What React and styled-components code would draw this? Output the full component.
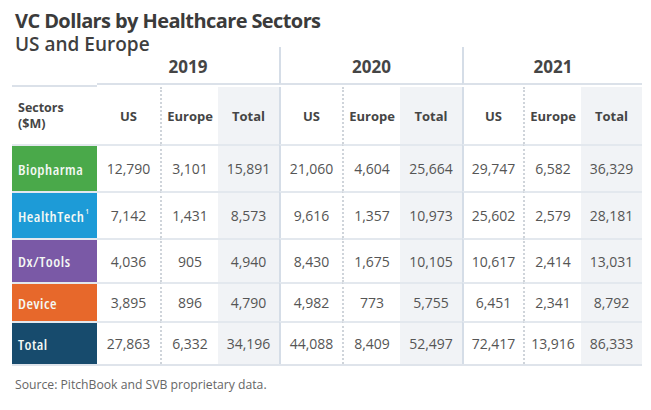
import React from 'react';
import styled, { createGlobalStyle } from 'styled-components';

const Global = createGlobalStyle`
  body {
    margin: 0;
    background: #ffffff;
    font-family: 'Open Sans', 'Noto Sans', sans-serif;
  }
`;

const groups = [
  { year: '2019' },
  { year: '2020' },
  { year: '2021' },
];

const rows = [
  { name: 'Biopharma', color: '#4aa94a', h: 47, vals: ['12,790', '3,101', '15,891', '21,060', '4,604', '25,664', '29,747', '6,582', '36,329'] },
  { name: 'HealthTech', sup: '1', color: '#1d9bd7', h: 47, vals: ['7,142', '1,431', '8,573', '9,616', '1,357', '10,973', '25,602', '2,579', '28,181'] },
  { name: 'Dx/Tools', color: '#7a59a6', h: 44, vals: ['4,036', '905', '4,940', '8,430', '1,675', '10,105', '10,617', '2,414', '13,031'] },
  { name: 'Device', color: '#e7682b', h: 39, vals: ['3,895', '896', '4,790', '4,982', '773', '5,755', '6,451', '2,341', '8,792'] },
  { name: 'Total', color: '#174b6d', h: 43, vals: ['27,863', '6,332', '34,196', '44,088', '8,409', '52,497', '72,417', '13,916', '86,333'] },
];

const subCols = ['US', 'Europe', 'Total'];

export default function App() {
  return (
    <Page>
      <Global />
      <Title>VC Dollars by Healthcare Sectors</Title>
      <Subtitle>US and Europe</Subtitle>
      <Table>
        <Corner />
        {groups.map((g, i) => (
          <Year key={g.year} $divider={i > 0}>{g.year}</Year>
        ))}

        <HeadLabel>
          <span>Sectors</span>
          <span>($M)</span>
        </HeadLabel>
        {groups.map((g, gi) =>
          subCols.map((c, ci) => (
            <HeadCell
              key={g.year + c}
              $kind={ci}
              $divider={gi > 0 && ci === 0}
            >
              {c}
            </HeadCell>
          ))
        )}

        {rows.map((r) => (
          <React.Fragment key={r.name}>
            <Sector $color={r.color} $h={r.h}>
              {r.name}
              {r.sup && <sup>{r.sup}</sup>}
            </Sector>
            {r.vals.map((v, i) => (
              <Cell
                key={i}
                $h={r.h}
                $kind={i % 3}
                $divider={i > 0 && i % 3 === 0}
              >
                {v}
              </Cell>
            ))}
          </React.Fragment>
        ))}
      </Table>
      <Source>Source: PitchBook and SVB proprietary data.</Source>
    </Page>
  );
}

const Page = styled.div`
  width: 651px;
  height: 410px;
  padding: 9px 9px 0 12px;
  box-sizing: border-box;
  color: #444;
`;

const Title = styled.h1`
  margin: 0 0 0 3px;
  font-size: 20px;
  line-height: 24px;
  font-weight: 700;
  font-stretch: 88%;
  letter-spacing: -0.6px;
  color: #3b3b3b;
`;

const Subtitle = styled.h2`
  margin: 0 0 0 3px;
  font-size: 19px;
  line-height: 23px;
  font-weight: 600;
  font-stretch: 95%;
  color: #3f3f3f;
`;

const Table = styled.div`
  display: grid;
  grid-template-columns: 85px 63px 58px 61px 63px 58px 62px 61px 58px 61px;
  margin-top: -9px;
  border-bottom: 2px solid #dfe4eb;
  width: 630px;
`;

const Corner = styled.div`
  height: 38px;
  border-bottom: 2px solid #dbe1e9;
`;

const Year = styled.div`
  grid-column: span 3;
  height: 38px;
  display: flex;
  align-items: center;
  justify-content: center;
  padding-top: 2px;
  box-sizing: border-box;
  font-size: 17px;
  font-weight: 700;
  color: #454545;
  border-bottom: 2px solid #dbe1e9;
  border-left: ${(p) => (p.$divider ? '2px solid #d5dde7' : 'none')};
`;

const HeadLabel = styled.div`
  height: 57px;
  display: flex;
  flex-direction: column;
  justify-content: center;
  padding-left: 6px;
  font-size: 12.5px;
  line-height: 16px;
  font-weight: 700;
  color: #454545;
`;

const cellBg = (k) => (k === 2 ? '#f1f3f6' : '#ffffff');
const cellBorder = (p) => {
  if (p.$divider) return '2px solid #d5dde7';
  if (p.$kind === 1) return '2px dotted #cfd4da';
  return 'none';
};

const HeadCell = styled.div`
  height: 57px;
  display: flex;
  align-items: center;
  justify-content: center;
  box-sizing: border-box;
  font-size: 13px;
  font-weight: 700;
  color: #454545;
  background: ${(p) => cellBg(p.$kind)};
  border-left: ${cellBorder};
`;

const Sector = styled.div`
  height: ${(p) => p.$h}px;
  box-sizing: border-box;
  border-top: 2px solid #e3e8ee;
  background: ${(p) => p.$color};
  display: flex;
  align-items: center;
  padding-left: 6px;
  white-space: nowrap;
  font-size: 15px;
  font-weight: 600;
  font-stretch: 75%;
  letter-spacing: 0.5px;
  color: #f4f8f4;
  sup {
    font-size: 7px;
    margin-left: 1px;
    align-self: flex-start;
    margin-top: 14px;
  }
`;

const Cell = styled.div`
  height: ${(p) => p.$h}px;
  box-sizing: border-box;
  border-top: 2px solid #e3e8ee;
  display: flex;
  align-items: center;
  justify-content: center;
  font-size: 14px;
  font-weight: 500;
  color: #555555;
  background: ${(p) => cellBg(p.$kind)};
  border-left: ${cellBorder};
`;

const Source = styled.p`
  margin: 10px 0 0 3px;
  font-size: 12.2px;
  color: #666666;
`;
